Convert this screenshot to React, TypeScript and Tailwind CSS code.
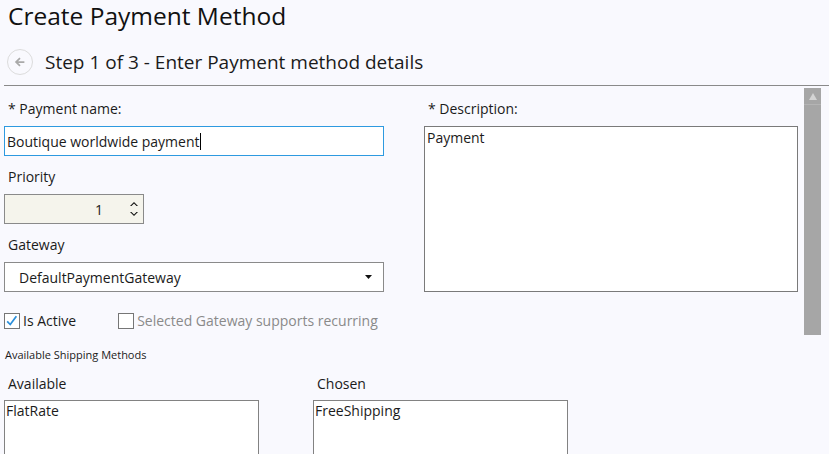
import React from 'react';

const font = { fontFamily: '"Open Sans", "Noto Sans", sans-serif' };

function Check({ checked }: { checked?: boolean }) {
  return (
    <span className="relative inline-block w-4 h-4 border border-[#767676] bg-white shrink-0">
      {checked && (
        <svg viewBox="0 0 16 16" className="absolute left-0 top-0 w-[14px] h-[14px]">
          <path d="M2.5 8.5 L6 12 L13 2.5" fill="none" stroke="#2b8fdb" strokeWidth="2" />
        </svg>
      )}
    </span>
  );
}

function ListBox({ items }: { items: string[] }) {
  return (
    <div className="w-[255px] h-[60px] border border-[#828282] bg-white px-[1px] text-[14px] leading-[20px] text-[#1b1b1b]">
      {items.map((i) => (
        <div key={i}>{i}</div>
      ))}
    </div>
  );
}

export default function App() {
  return (
    <div className="w-[829px] h-[454px] overflow-hidden bg-[#f9f9fe] text-[#1b1b1b]" style={font}>
      {/* header */}
      <div className="pl-2 pt-[1px] h-[33px] text-[24.5px] leading-[30px] text-[#111]">Create Payment Method</div>
      <div className="flex items-center h-[52px] pt-[6px] pl-[7px]">
        <span className="w-[26px] h-[26px] rounded-full border border-[#dcdcdc] flex items-center justify-center">
          <svg viewBox="0 0 16 16" className="w-[14px] h-[14px]">
            <path d="M13 8 H4 M8 3.5 L3.5 8 L8 12.5" fill="none" stroke="#a9a9a9" strokeWidth="2" />
          </svg>
        </span>
        <span className="ml-3 text-[19px] leading-[24px]">Step 1 of 3 - Enter Payment method details</span>
      </div>
      <div className="ml-1 h-px bg-[#8a8a8a]" />

      {/* form */}
      <div className="flex h-[250px]">
        <div className="flex-1 flex pl-1 pt-[12px]">
          <div className="w-[380px] flex flex-col">
            <div className="pl-1 text-[14px] leading-[20px] pt-px">* Payment name:</div>
            <div className="mt-[7px] h-[30px] border border-[#2e9ae0] bg-white flex items-center pl-[2px] text-[14px]">
              Boutique worldwide payment<span className="inline-block w-px h-[17px] bg-black" />
            </div>
            <div className="mt-[11px] pl-1 text-[14px] leading-[20px]">Priority</div>
            <div className="mt-[7px] w-[140px] h-[30px] border border-[#8a8a8a] bg-[#f5f4ec] flex items-center justify-end text-[14px]">
              <span className="mr-[27px]">1</span>
              <span className="flex flex-col items-center gap-[6px] mr-[5px]">
                <svg viewBox="0 0 8 5" className="w-[8px] h-[5px]"><path d="M0 5 L4 1 L8 5 L6.5 5 L4 2.5 L1.5 5 Z" fill="#111" /></svg>
                <svg viewBox="0 0 8 5" className="w-[8px] h-[5px]"><path d="M0 0 L4 4 L8 0 L6.5 0 L4 2.5 L1.5 0 Z" fill="#111" /></svg>
              </span>
            </div>
            <div className="mt-[11px] pl-1 text-[14px] leading-[20px]">Gateway</div>
            <div className="mt-[7px] h-[30px] border border-[#8a8a8a] bg-white flex items-center pl-[14px] pr-[11px] text-[14px]">
              <span className="flex-1">DefaultPaymentGateway</span>
              <svg viewBox="0 0 7 4" className="w-[7px] h-[4px]"><path d="M0 0 H7 L3.5 4 Z" fill="#111" /></svg>
            </div>
            <div className="mt-[19px] flex items-center text-[14px] leading-[20px]">
              <Check checked />
              <span className="ml-[3px]">Is Active</span>
              <span className="ml-[42px] flex items-center text-[#8a8a8a]">
                <Check />
                <span className="ml-[3px]">Selected Gateway supports recurring</span>
              </span>
            </div>
          </div>
          <div className="ml-[40px] w-[374px] flex flex-col">
            <div className="pl-1 text-[14px] leading-[20px] pt-px">* Description:</div>
            <div className="mt-[7px] h-[166px] border border-[#7a7a7a] bg-white pl-[2px] pt-[1px] text-[14px] leading-[20px]">
              Payment
            </div>
          </div>
        </div>
        <div className="mt-[2px] mr-2 w-[17px] h-[247px] bg-[#a6a6a6] flex flex-col">
          <div className="h-[17px] border-b border-[#b4b4b4] flex items-center justify-center">
            <svg viewBox="0 0 8 7" className="w-[8px] h-[7px]"><path d="M4 0 L8 7 H0 Z" fill="#d4d4d4" /></svg>
          </div>
        </div>
      </div>

      {/* shipping */}
      <div className="pl-[5px] mt-[11px] text-[11px] leading-[16px]">Available Shipping Methods</div>
      <div className="flex pl-1 mt-[11px] gap-[54px]">
        <div className="flex flex-col">
          <div className="pl-1 text-[14px] leading-[20px]">Available</div>
          <div className="mt-[6px]"><ListBox items={['FlatRate']} /></div>
        </div>
        <div className="flex flex-col">
          <div className="pl-1 text-[14px] leading-[20px]">Chosen</div>
          <div className="mt-[6px]"><ListBox items={['FreeShipping']} /></div>
        </div>
      </div>
    </div>
  );
}
